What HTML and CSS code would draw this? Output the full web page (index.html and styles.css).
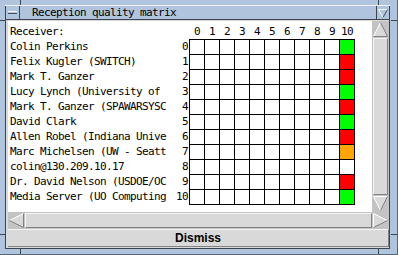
FILE: index.html
```html
<!DOCTYPE html>
<html lang="en">
<head>
    <meta charset="UTF-8">
    <title>Reception quality matrix</title>
    <link rel="stylesheet" href="styles.css">
</head>
<body>
    <div class="window">
        <div class="titlebar">
            <div class="tb-btn tb-menu"><span class="minus"></span></div>
            <div class="title">Reception quality matrix</div>
            <div class="tb-btn tb-down">
                <svg width="12" height="12" viewBox="0 0 12 12">
                    <polyline points="1.5,2.5 10.5,2.5" stroke="#f4f7fb" fill="none"/>
                    <polyline points="1.5,2.5 6,10.5" stroke="#f4f7fb" fill="none"/>
                    <polyline points="10.5,2.5 6,10.5" stroke="#44505e" fill="none"/>
                </svg>
            </div>
        </div>
        <div class="client">
            <div class="view">
                <div class="canvas">
                    <div class="labels">
                        <div class="row"><span>Receiver:</span></div>
                        <div class="row"><span>Colin Perkins</span><span>0</span></div>
                        <div class="row"><span>Felix Kugler (SWITCH)</span><span>1</span></div>
                        <div class="row"><span>Mark T. Ganzer</span><span>2</span></div>
                        <div class="row"><span>Lucy Lynch (University of</span><span>3</span></div>
                        <div class="row"><span>Mark T. Ganzer (SPAWARSYSC</span><span>4</span></div>
                        <div class="row"><span>David Clark</span><span>5</span></div>
                        <div class="row"><span>Allen Robel (Indiana Unive</span><span>6</span></div>
                        <div class="row"><span>Marc Michelsen (UW - Seatt</span><span>7</span></div>
                        <div class="row"><span>colin@130.209.10.17</span><span>8</span></div>
                        <div class="row"><span>Dr. David Nelson (USDOE/OC</span><span>9</span></div>
                        <div class="row"><span>Media Server (UO Computing</span><span>10</span></div>
                    </div>
                    <div class="matrix-col">
                        <div class="heads" id="heads"></div>
                        <div class="matrix" id="matrix"></div>
                    </div>
                </div>
                <div class="vscroll">
                    <div class="arrow">
                        <svg width="15" height="15" viewBox="0 0 15 15">
                            <polygon points="7.5,0.5 0.5,14.5 14.5,14.5" fill="#d9d9d9"/>
                            <polyline points="0.5,14.5 7.5,0.5" stroke="#ffffff" fill="none"/>
                            <polyline points="7.5,0.5 14.5,14.5 0.5,14.5" stroke="#828282" fill="none"/>
                        </svg>
                    </div>
                    <div class="slider"></div>
                    <div class="arrow">
                        <svg width="15" height="15" viewBox="0 0 15 15">
                            <polygon points="0.5,0.5 14.5,0.5 7.5,14.5" fill="#d9d9d9"/>
                            <polyline points="7.5,14.5 0.5,0.5 14.5,0.5" stroke="#ffffff" fill="none"/>
                            <polyline points="14.5,0.5 7.5,14.5" stroke="#828282" fill="none"/>
                        </svg>
                    </div>
                </div>
            </div>
            <div class="hscroll">
                <div class="arrow">
                    <svg width="15" height="15" viewBox="0 0 15 15">
                        <polygon points="0.5,7.5 14.5,0.5 14.5,14.5" fill="#d9d9d9"/>
                        <polyline points="0.5,7.5 14.5,0.5" stroke="#ffffff" fill="none"/>
                        <polyline points="14.5,0.5 14.5,14.5 0.5,7.5" stroke="#828282" fill="none"/>
                    </svg>
                </div>
                <div class="slider"></div>
                <div class="arrow">
                    <svg width="15" height="15" viewBox="0 0 15 15">
                        <polygon points="0.5,0.5 14.5,7.5 0.5,14.5" fill="#d9d9d9"/>
                        <polyline points="0.5,14.5 0.5,0.5 14.5,7.5" stroke="#ffffff" fill="none"/>
                        <polyline points="14.5,7.5 0.5,14.5" stroke="#828282" fill="none"/>
                    </svg>
                </div>
            </div>
            <button class="dismiss" type="button">Dismiss</button>
        </div>
        <span class="mark mark-top" style="left:20px"></span>
        <span class="mark mark-top" style="left:378px"></span>
        <span class="mark mark-bottom" style="left:20px"></span>
        <span class="mark mark-bottom" style="left:378px"></span>
        <span class="mark mark-left" style="top:20px"></span>
        <span class="mark mark-left" style="top:234px"></span>
        <span class="mark mark-right" style="top:20px"></span>
        <span class="mark mark-right" style="top:234px"></span>
    </div>
    <script>
        // reception quality of each receiver, as seen by source 10
        var quality = ["good", "bad", "bad", "good", "bad", "good", "bad", "fair", "", "bad", "good"];
        var count = quality.length;

        var heads = document.getElementById("heads");
        var matrix = document.getElementById("matrix");

        for (let i = 0; i < count; i++) {
            let head = document.createElement("span");
            head.textContent = i;
            heads.appendChild(head);
        }

        for (let row = 0; row < count; row++) {
            for (let col = 0; col < count; col++) {
                let cell = document.createElement("div");
                cell.className = "cell";
                if (col == count - 1 && quality[row]) {
                    cell.classList.add(quality[row]);
                }
                matrix.appendChild(cell);
            }
        }
    </script>
</body>
</html>
```

FILE: styles.css
```css
body {
  margin: 0;
  background: #b0c4de;
  font-family: "DejaVu Sans Mono", monospace;
  color: #000;
}
.window {
  position: relative;
  width: 398px;
  height: 255px;
  box-sizing: border-box;
  padding: 5px 7px 6px 5px;
  display: flex;
  flex-direction: column;
  border-right: 1px solid #56657a;
  border-bottom: 1px solid #56657a;
}

/* title bar */
.titlebar {
  height: 14px;
  display: flex;
  box-sizing: border-box;
  border-top: 1px solid #eef3f9;
}
.tb-btn {
  display: flex;
  align-items: center;
  justify-content: center;
  border-left: 1px solid #3c4450;
  border-right: 1px solid #3c4450;
}
.tb-menu {
  width: 13px;
}
.tb-down {
  width: 12px;
}
.minus {
  width: 9px;
  height: 1px;
  border-top: 1px solid #f4f7fb;
  border-bottom: 1px solid #44505e;
}
.title {
  flex: 1;
  padding-left: 12px;
  font-size: 11px;
  letter-spacing: -0.62px;
  line-height: 13px;
  white-space: nowrap;
}

/* client area */
.client {
  flex: 1;
  border: 1px solid #3c4450;
  background: #d9d9d9;
  padding: 1px 0 1px 2px;
  display: flex;
  flex-direction: column;
}
.view {
  display: flex;
  height: 191px;
}
.canvas {
  width: 365px;
  background: #fff;
  padding: 3px 0 0 2px;
  box-sizing: border-box;
  display: flex;
}
.labels {
  width: 179px;
}
.row {
  height: 15px;
  display: flex;
  justify-content: space-between;
  align-items: center;
  padding-right: 1px;
  font-size: 11px;
  letter-spacing: -0.62px;
  white-space: nowrap;
}
.heads {
  height: 15px;
  display: grid;
  grid-template-columns: repeat(11, 15px);
  align-items: center;
  font-size: 11px;
  letter-spacing: -0.62px;
}
.heads span {
  text-align: center;
  padding-left: 1px;
}
.matrix {
  display: grid;
  grid-template-columns: repeat(11, 14px);
  grid-auto-rows: 14px;
  gap: 1px;
  padding: 1px;
  background: #000;
  width: max-content;
}
.cell {
  background: #fff;
}
.good {
  background: #00ff00;
}
.bad {
  background: #ff0000;
}
.fair {
  background: #ffa500;
}

/* scrollbars */
.vscroll {
  width: 17px;
  background: #c3c3c3;
  box-sizing: border-box;
  padding: 1px;
  display: flex;
  flex-direction: column;
}
.hscroll {
  height: 17px;
  background: #c3c3c3;
  box-sizing: border-box;
  padding: 1px;
  display: flex;
}
.arrow {
  width: 15px;
  height: 15px;
  flex: none;
}
.arrow svg {
  display: block;
}
.slider {
  flex: 1;
  background: #d9d9d9;
  border-top: 1px solid #f5f5f5;
  border-left: 1px solid #f5f5f5;
  border-bottom: 1px solid #828282;
  border-right: 1px solid #828282;
}
.vscroll .slider {
  margin: 1px 0;
}
.hscroll .slider {
  margin: 0 1px;
}

.dismiss {
  height: 18px;
  padding: 0;
  background: #d9d9d9;
  border: none;
  border-top: 1px solid #f5f5f5;
  border-bottom: 1px solid #828282;
  border-right: 1px solid #828282;
  font-family: "Liberation Sans", Arial, sans-serif;
  font-weight: bold;
  font-size: 12px;
  color: #000;
}

/* resize corner marks on the frame */
.mark {
  position: absolute;
  background: #3c4450;
}
.mark-top {
  top: 0;
  width: 1px;
  height: 5px;
}
.mark-bottom {
  bottom: 0;
  width: 1px;
  height: 5px;
}
.mark-left {
  left: 0;
  width: 5px;
  height: 1px;
}
.mark-right {
  right: 0;
  width: 6px;
  height: 1px;
}
```
